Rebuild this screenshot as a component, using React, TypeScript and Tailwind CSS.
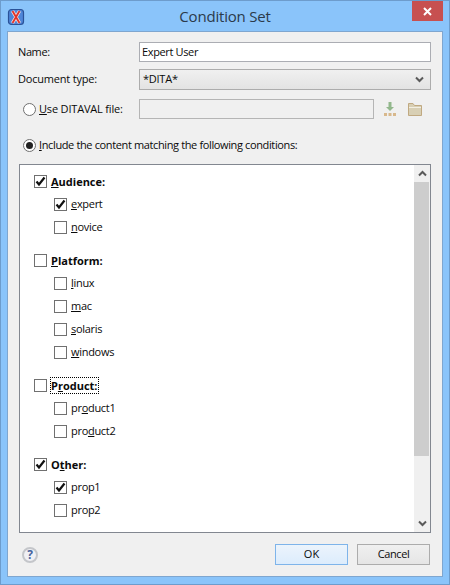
import React from 'react';

const FONT = "font-['Open_Sans','Noto_Sans',sans-serif]";

// the letter at index `at` is underlined, like a Windows mnemonic
function Mnemonic({ text, at }: { text: string; at: number }) {
  return (
    <>
      {text.slice(0, at)}
      <span className="underline">{text[at]}</span>
      {text.slice(at + 1)}
    </>
  );
}

function CheckBox({ checked }: { checked?: boolean }) {
  return (
    <span className="w-[13px] h-[13px] border border-[#707070] bg-white flex items-center justify-center shrink-0">
      {checked && (
        <svg width="11" height="11" viewBox="0 0 11 11">
          <path d="M1.5 5.5 L4 8.5 L9.5 1.5" fill="none" stroke="#111" strokeWidth="2.2" />
        </svg>
      )}
    </span>
  );
}

function Radio({ checked }: { checked?: boolean }) {
  return (
    <span className="w-[13px] h-[13px] rounded-full border border-[#707070] bg-white flex items-center justify-center shrink-0">
      {checked && <span className="w-[7px] h-[7px] rounded-full bg-[#222]" />}
    </span>
  );
}

function Chevron({ up }: { up?: boolean }) {
  return (
    <svg width="9" height="7" viewBox="0 0 9 7" className="shrink-0">
      <path d={up ? 'M1 5.5 L4.5 2 L8 5.5' : 'M1 1.5 L4.5 5 L8 1.5'} fill="none" stroke="#5a5a5a" strokeWidth="2" />
    </svg>
  );
}

type Item = { label: string; at?: number; checked?: boolean };
type Group = Item & { items: Item[]; focused?: boolean };

const GROUPS: Group[] = [
  { label: 'Audience:', at: 0, checked: true, items: [
    { label: 'expert', at: 0, checked: true },
    { label: 'novice', at: 0 },
  ] },
  { label: 'Platform:', at: 0, items: [
    { label: 'linux', at: 0 },
    { label: 'mac', at: 0 },
    { label: 'solaris', at: 0 },
    { label: 'windows', at: 0 },
  ] },
  { label: 'Product:', at: 1, focused: true, items: [
    { label: 'product1', at: 2 },
    { label: 'product2', at: 3 },
  ] },
  { label: 'Other:', at: 1, checked: true, items: [
    { label: 'prop1', checked: true },
    { label: 'prop2' },
  ] },
];

export default function App() {
  return (
    <div className={`w-[450px] h-[585px] bg-[#8ac4fa] border border-[#6d9ccc] flex flex-col text-[11px] text-[#0a0a0a] ${FONT} relative overflow-hidden`}>
      {/* Title bar */}
      <div className="h-[30px] shrink-0 flex items-center pl-[6px] pt-[1px]">
        <svg width="18" height="18" viewBox="0 0 18 18">
          <rect x="1.5" y="1.5" width="15" height="15" rx="3" fill="#4f86d8" stroke="#2a5298" strokeWidth="1.2" />
          <path d="M5.5 3 L12.5 15 M12.5 3 L5.5 15" stroke="#f6e3e0" strokeWidth="3.4" />
          <path d="M5.5 3 L12.5 15 M12.5 3 L5.5 15" stroke="#e2342a" strokeWidth="1.8" />
        </svg>
      </div>
      <div className="absolute left-0 right-0 top-0 h-[30px] flex items-center justify-center text-[15px] tracking-[-0.2px] text-[#2b3a4a] pointer-events-none">
        Condition Set
      </div>
      <div className="absolute top-0 right-[6px] w-[31px] h-[20px] bg-[#c75050] flex items-center justify-center">
        <svg width="9" height="9" viewBox="0 0 9 9">
          <path d="M1 1 L8 8 M8 1 L1 8" stroke="#fff" strokeWidth="2" />
        </svg>
      </div>

      {/* Dialog body */}
      <div className="flex-1 mx-[6px] mb-[7px] bg-[#f0f0f0] border border-[#7fa6cf] pl-[10px] pr-[10px] pt-[10px] flex flex-col">
        <div className="flex items-center h-[20px]">
          <span className="w-[121px] tracking-[-0.4px]">Name:</span>
          <div className="w-[292px] h-[20px] bg-white border border-[#abadb3] flex items-center pl-[2px] tracking-[-0.36px]">Expert User</div>
        </div>
        <div className="flex items-center h-[21px] mt-[7px]">
          <span className="w-[121px] tracking-[-0.2px]">Document type:</span>
          <div className="w-[292px] h-[21px] bg-gradient-to-b from-[#f0f0f0] to-[#e3e3e3] border border-[#acacac] flex items-center justify-between pl-[3px] pr-[6px]">
            <span className="tracking-[-0.25px]">*DITA*</span>
            <Chevron />
          </div>
        </div>

        <div className="flex items-center h-[20px] mt-[9px]">
          <span className="w-[121px] flex items-center gap-[3px] pl-[5px]">
            <Radio />
            <span className="tracking-[-0.18px]"><Mnemonic text="Use DITAVAL file:" at={0} /></span>
          </span>
          <div className="w-[235px] h-[20px] bg-[#f0f0f0] border border-[#b5b5b5]" />
          <svg width="14" height="16" viewBox="0 0 14 16" className="ml-[9px]">
            <path d="M5.5 1 H8.5 V6 H11 L7 10 L3 6 H5.5 Z" fill="#92b78c" />
            <rect x="1" y="12" width="3" height="3" fill="#d8b88c" />
            <rect x="5.5" y="12" width="3" height="3" fill="#d8b88c" />
            <rect x="10" y="12" width="3" height="3" fill="#d8b88c" />
          </svg>
          <svg width="14" height="13" viewBox="0 0 14 13" className="ml-[11px]">
            <path d="M0.5 12.5 V0.5 H5 L6.5 2.5 H13.5 V12.5 Z" fill="#d8cfb4" stroke="#c0a981" />
            <path d="M1 4.5 H13" stroke="#f3efe2" />
          </svg>
        </div>

        <div className="flex items-center h-[20px] mt-[16px] gap-[3px] pl-[5px]">
          <Radio checked />
          <span className="tracking-[-0.37px]"><Mnemonic text="Include the content matching the following conditions:" at={0} /></span>
        </div>

        {/* Condition list */}
        <div className="mt-[9px] ml-[1px] w-[412px] h-[369px] bg-white border border-[#828790] flex">
          <div className="flex-1 pl-[14px] pt-[5px]">
            {GROUPS.map((group, i) => (
              <div key={group.label} className={i > 0 ? 'mt-[10px]' : ''}>
                <div className="h-[23px] flex items-center gap-[4px]">
                  <CheckBox checked={group.checked} />
                  <span className={`font-bold leading-[15px] ${group.focused ? 'outline-1 outline-dotted outline-black' : ''}`}>
                    <Mnemonic text={group.label} at={group.at ?? -1} />
                  </span>
                </div>
                {group.items.map(item => (
                  <div key={item.label} className="h-[23px] flex items-center gap-[4px] pl-[20px]">
                    <CheckBox checked={item.checked} />
                    <span className="tracking-[-0.3px]">{item.at === undefined ? item.label : <Mnemonic text={item.label} at={item.at} />}</span>
                  </div>
                ))}
              </div>
            ))}
          </div>
          <div className="w-[16px] bg-[#f0f0f0] flex flex-col">
            <div className="h-[17px] flex items-center justify-center"><Chevron up /></div>
            <div className="h-[274px] w-[15px] bg-[#cdcdcd]" />
            <div className="flex-1" />
            <div className="h-[17px] flex items-center justify-center"><Chevron /></div>
          </div>
        </div>

        {/* Footer */}
        <div className="flex items-center mt-[11px]">
          <div className="w-[16px] h-[16px] ml-[4px] rounded-full border-2 border-[#c4c6ca] bg-[#f0f0f4] flex items-center justify-center text-[12px] font-bold text-[#46629e]">?</div>
          <div className="flex-1" />
          <button className="w-[73px] h-[21px] bg-gradient-to-b from-[#ecf4fc] to-[#dcecfc] border border-[#7eb4ea]">OK</button>
          <button className="w-[73px] h-[21px] ml-[9px] mr-[2px] bg-gradient-to-b from-[#f0f0f0] to-[#e5e5e5] border border-[#acacac] tracking-[-0.4px]">Cancel</button>
        </div>
      </div>
    </div>
  );
}
